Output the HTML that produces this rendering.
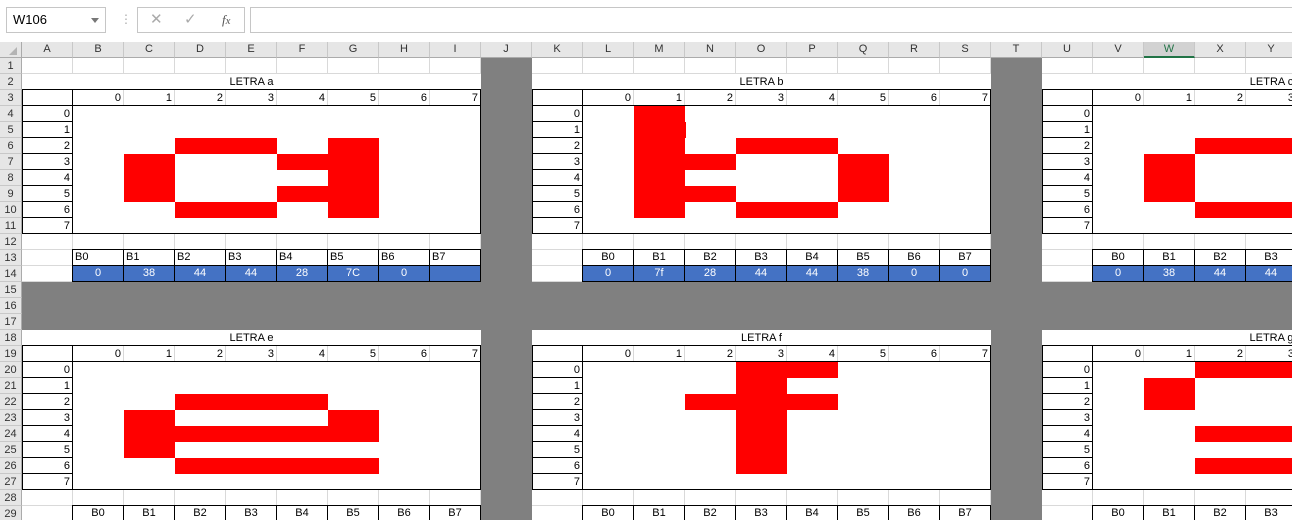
<!DOCTYPE html><html style="overflow:hidden;width:1292px;height:520px"><head><style>
*{box-sizing:border-box;margin:0;padding:0}
html,body{overflow:hidden}
body{width:1292px;height:520px;overflow:hidden;position:relative;background:#fff;font-family:"Liberation Sans",Arial,sans-serif;font-size:11px;color:#000}
#w{position:absolute;left:0;top:0;width:1292px;height:520px;overflow:hidden}
.a{position:absolute}
.grid{left:22px;top:58px;width:1270px;height:462px;background-image:linear-gradient(to right,transparent 50px,#d9d9d9 50px),linear-gradient(to bottom,transparent 15px,#d9d9d9 15px);background-size:51px 100%,100% 16px}
.ch{top:42px;height:16px;width:51px;background:#e6e6e6;border-right:1px solid #c8c8c8;border-bottom:1px solid #ababab;text-align:center;line-height:15px;color:#333}
.rh{left:0;width:22px;height:16px;background:#e6e6e6;border-bottom:1px solid #c8c8c8;border-right:1px solid #ababab;text-align:center;line-height:16px;color:#333}
.blk{position:absolute;width:459px;height:224px}
.blk>div{position:absolute}
.t{left:0;top:0;width:459px;height:15px;background:#fff;text-align:center;line-height:16px}
.box{left:0;top:15px;width:459px;height:145px;border:1px solid #000}
.hl{left:0;top:31px;width:459px;height:1px;background:#000}
.vl{left:50px;top:15px;width:1px;height:145px;background:#000}
.in{left:51px;top:32px;width:407px;height:127px;background:#fff}
.n{width:48px;text-align:right;line-height:16px;height:16px}
.rl{left:0;width:51px;height:1px;background:#000}
.r{background:#f00}
.c13{width:52px;height:17px;border:1px solid #000;background:#fff;line-height:15px;padding-left:2px}
.cc{text-align:center;padding-left:0}
.c14{width:52px;height:17px;border:1px solid #000;background:#4472c4;color:#fff;text-align:center;line-height:15px}
.g{background:#808080}
</style></head><body><div id="w">
<div class="a" style="left:6px;top:7px;width:100px;height:26px;border:1px solid #c6c6c6;font-size:13px;line-height:24px;padding-left:6px">W106<span class="a" style="left:84px;top:10px;border-left:4px solid transparent;border-right:4px solid transparent;border-top:5px solid #777"></span></div>
<div class="a" style="left:120px;top:12px;color:#aaa;font-size:12px">⋮</div>
<div class="a" style="left:137px;top:7px;width:108px;height:26px;border:1px solid #c6c6c6;color:#aaa;font-size:15px;line-height:24px"><span class="a" style="left:12px">✕</span><span class="a" style="left:46px">✓</span><span class="a" style="left:84px;color:#555;font-style:italic;font-family:'Liberation Serif',serif;font-size:13px">f<small>x</small></span></div>
<div class="a" style="left:250px;top:7px;width:1042px;height:26px;border:1px solid #c6c6c6;border-right:none"></div>
<div class="a grid"></div>
<div class="a" style="left:0;top:42px;width:22px;height:16px;background:#e6e6e6;border-right:1px solid #ababab;border-bottom:1px solid #ababab"></div>
<div class="a" style="left:9px;top:47px;border-left:8px solid transparent;border-bottom:8px solid #b4b4b4"></div>
<div class="a ch" style="left:22px">A</div><div class="a ch" style="left:73px">B</div><div class="a ch" style="left:124px">C</div><div class="a ch" style="left:175px">D</div><div class="a ch" style="left:226px">E</div><div class="a ch" style="left:277px">F</div><div class="a ch" style="left:328px">G</div><div class="a ch" style="left:379px">H</div><div class="a ch" style="left:430px">I</div><div class="a ch" style="left:481px">J</div><div class="a ch" style="left:532px">K</div><div class="a ch" style="left:583px">L</div><div class="a ch" style="left:634px">M</div><div class="a ch" style="left:685px">N</div><div class="a ch" style="left:736px">O</div><div class="a ch" style="left:787px">P</div><div class="a ch" style="left:838px">Q</div><div class="a ch" style="left:889px">R</div><div class="a ch" style="left:940px">S</div><div class="a ch" style="left:991px">T</div><div class="a ch" style="left:1042px">U</div><div class="a ch" style="left:1093px">V</div><div class="a ch" style="left:1144px;background:#d2d2d2;border-bottom:2px solid #217346;color:#217346">W</div><div class="a ch" style="left:1195px">X</div><div class="a ch" style="left:1246px">Y</div>
<div class="a rh" style="top:58px">1</div><div class="a rh" style="top:74px">2</div><div class="a rh" style="top:90px">3</div><div class="a rh" style="top:106px">4</div><div class="a rh" style="top:122px">5</div><div class="a rh" style="top:138px">6</div><div class="a rh" style="top:154px">7</div><div class="a rh" style="top:170px">8</div><div class="a rh" style="top:186px">9</div><div class="a rh" style="top:202px">10</div><div class="a rh" style="top:218px">11</div><div class="a rh" style="top:234px">12</div><div class="a rh" style="top:250px">13</div><div class="a rh" style="top:266px">14</div><div class="a rh" style="top:282px">15</div><div class="a rh" style="top:298px">16</div><div class="a rh" style="top:314px">17</div><div class="a rh" style="top:330px">18</div><div class="a rh" style="top:346px">19</div><div class="a rh" style="top:362px">20</div><div class="a rh" style="top:378px">21</div><div class="a rh" style="top:394px">22</div><div class="a rh" style="top:410px">23</div><div class="a rh" style="top:426px">24</div><div class="a rh" style="top:442px">25</div><div class="a rh" style="top:458px">26</div><div class="a rh" style="top:474px">27</div><div class="a rh" style="top:490px">28</div><div class="a rh" style="top:506px">29</div>

<div class="blk" style="left:22px;top:74px">
<div class="t">LETRA a</div><div class="box"></div><div class="hl"></div><div class="vl"></div><div class="in"></div>
<div class="n" style="left:51px;top:16px">0</div><div class="n" style="left:102px;top:16px">1</div><div class="n" style="left:153px;top:16px">2</div><div class="n" style="left:204px;top:16px">3</div><div class="n" style="left:255px;top:16px">4</div><div class="n" style="left:306px;top:16px">5</div><div class="n" style="left:357px;top:16px">6</div><div class="n" style="left:408px;top:16px">7</div>
<div class="n" style="left:0;top:32px">0</div><div class="n" style="left:0;top:48px">1</div><div class="n" style="left:0;top:64px">2</div><div class="n" style="left:0;top:80px">3</div><div class="n" style="left:0;top:96px">4</div><div class="n" style="left:0;top:112px">5</div><div class="n" style="left:0;top:128px">6</div><div class="n" style="left:0;top:144px">7</div>
<div class="rl" style="top:47px"></div><div class="rl" style="top:63px"></div><div class="rl" style="top:79px"></div><div class="rl" style="top:95px"></div><div class="rl" style="top:111px"></div><div class="rl" style="top:127px"></div><div class="rl" style="top:143px"></div>
<div class="r" style="left:153px;top:64px;width:102px;height:16px"></div><div class="r" style="left:306px;top:64px;width:51px;height:80px"></div><div class="r" style="left:102px;top:80px;width:51px;height:48px"></div><div class="r" style="left:255px;top:80px;width:51px;height:16px"></div><div class="r" style="left:255px;top:112px;width:51px;height:16px"></div><div class="r" style="left:153px;top:128px;width:102px;height:16px"></div>
<div class="c13" style="left:50px;top:175px">B0</div><div class="c13" style="left:101px;top:175px">B1</div><div class="c13" style="left:152px;top:175px">B2</div><div class="c13" style="left:203px;top:175px">B3</div><div class="c13" style="left:254px;top:175px">B4</div><div class="c13" style="left:305px;top:175px">B5</div><div class="c13" style="left:356px;top:175px">B6</div><div class="c13" style="left:407px;top:175px">B7</div>
<div class="c14" style="left:50px;top:191px">0</div><div class="c14" style="left:101px;top:191px">38</div><div class="c14" style="left:152px;top:191px">44</div><div class="c14" style="left:203px;top:191px">44</div><div class="c14" style="left:254px;top:191px">28</div><div class="c14" style="left:305px;top:191px">7C</div><div class="c14" style="left:356px;top:191px">0</div><div class="c14" style="left:407px;top:191px"></div>
</div>

<div class="blk" style="left:532px;top:74px">
<div class="t">LETRA b</div><div class="box"></div><div class="hl"></div><div class="vl"></div><div class="in"></div>
<div class="n" style="left:51px;top:16px">0</div><div class="n" style="left:102px;top:16px">1</div><div class="n" style="left:153px;top:16px">2</div><div class="n" style="left:204px;top:16px">3</div><div class="n" style="left:255px;top:16px">4</div><div class="n" style="left:306px;top:16px">5</div><div class="n" style="left:357px;top:16px">6</div><div class="n" style="left:408px;top:16px">7</div>
<div class="n" style="left:0;top:32px">0</div><div class="n" style="left:0;top:48px">1</div><div class="n" style="left:0;top:64px">2</div><div class="n" style="left:0;top:80px">3</div><div class="n" style="left:0;top:96px">4</div><div class="n" style="left:0;top:112px">5</div><div class="n" style="left:0;top:128px">6</div><div class="n" style="left:0;top:144px">7</div>
<div class="rl" style="top:47px"></div><div class="rl" style="top:63px"></div><div class="rl" style="top:79px"></div><div class="rl" style="top:95px"></div><div class="rl" style="top:111px"></div><div class="rl" style="top:127px"></div><div class="rl" style="top:143px"></div>
<div class="r" style="left:102px;top:32px;width:51px;height:112px"></div><div class="r" style="left:102px;top:48px;width:52px;height:16px"></div><div class="r" style="left:153px;top:80px;width:51px;height:16px"></div><div class="r" style="left:153px;top:112px;width:51px;height:16px"></div><div class="r" style="left:204px;top:64px;width:102px;height:16px"></div><div class="r" style="left:204px;top:128px;width:102px;height:16px"></div><div class="r" style="left:306px;top:80px;width:51px;height:48px"></div>
<div class="c13 cc" style="left:50px;top:175px">B0</div><div class="c13 cc" style="left:101px;top:175px">B1</div><div class="c13 cc" style="left:152px;top:175px">B2</div><div class="c13 cc" style="left:203px;top:175px">B3</div><div class="c13 cc" style="left:254px;top:175px">B4</div><div class="c13 cc" style="left:305px;top:175px">B5</div><div class="c13 cc" style="left:356px;top:175px">B6</div><div class="c13 cc" style="left:407px;top:175px">B7</div>
<div class="c14" style="left:50px;top:191px">0</div><div class="c14" style="left:101px;top:191px">7f</div><div class="c14" style="left:152px;top:191px">28</div><div class="c14" style="left:203px;top:191px">44</div><div class="c14" style="left:254px;top:191px">44</div><div class="c14" style="left:305px;top:191px">38</div><div class="c14" style="left:356px;top:191px">0</div><div class="c14" style="left:407px;top:191px">0</div>
</div>

<div class="blk" style="left:1042px;top:74px">
<div class="t">LETRA c</div><div class="box"></div><div class="hl"></div><div class="vl"></div><div class="in"></div>
<div class="n" style="left:51px;top:16px">0</div><div class="n" style="left:102px;top:16px">1</div><div class="n" style="left:153px;top:16px">2</div><div class="n" style="left:204px;top:16px">3</div>
<div class="n" style="left:0;top:32px">0</div><div class="n" style="left:0;top:48px">1</div><div class="n" style="left:0;top:64px">2</div><div class="n" style="left:0;top:80px">3</div><div class="n" style="left:0;top:96px">4</div><div class="n" style="left:0;top:112px">5</div><div class="n" style="left:0;top:128px">6</div><div class="n" style="left:0;top:144px">7</div>
<div class="rl" style="top:47px"></div><div class="rl" style="top:63px"></div><div class="rl" style="top:79px"></div><div class="rl" style="top:95px"></div><div class="rl" style="top:111px"></div><div class="rl" style="top:127px"></div><div class="rl" style="top:143px"></div>
<div class="r" style="left:153px;top:64px;width:102px;height:16px"></div><div class="r" style="left:102px;top:80px;width:51px;height:48px"></div><div class="r" style="left:153px;top:128px;width:102px;height:16px"></div>
<div class="c13 cc" style="left:50px;top:175px">B0</div><div class="c13 cc" style="left:101px;top:175px">B1</div><div class="c13 cc" style="left:152px;top:175px">B2</div><div class="c13 cc" style="left:203px;top:175px">B3</div>
<div class="c14" style="left:50px;top:191px">0</div><div class="c14" style="left:101px;top:191px">38</div><div class="c14" style="left:152px;top:191px">44</div><div class="c14" style="left:203px;top:191px">44</div>
</div>

<div class="blk" style="left:22px;top:330px">
<div class="t">LETRA e</div><div class="box"></div><div class="hl"></div><div class="vl"></div><div class="in"></div>
<div class="n" style="left:51px;top:16px">0</div><div class="n" style="left:102px;top:16px">1</div><div class="n" style="left:153px;top:16px">2</div><div class="n" style="left:204px;top:16px">3</div><div class="n" style="left:255px;top:16px">4</div><div class="n" style="left:306px;top:16px">5</div><div class="n" style="left:357px;top:16px">6</div><div class="n" style="left:408px;top:16px">7</div>
<div class="n" style="left:0;top:32px">0</div><div class="n" style="left:0;top:48px">1</div><div class="n" style="left:0;top:64px">2</div><div class="n" style="left:0;top:80px">3</div><div class="n" style="left:0;top:96px">4</div><div class="n" style="left:0;top:112px">5</div><div class="n" style="left:0;top:128px">6</div><div class="n" style="left:0;top:144px">7</div>
<div class="rl" style="top:47px"></div><div class="rl" style="top:63px"></div><div class="rl" style="top:79px"></div><div class="rl" style="top:95px"></div><div class="rl" style="top:111px"></div><div class="rl" style="top:127px"></div><div class="rl" style="top:143px"></div>
<div class="r" style="left:153px;top:64px;width:153px;height:16px"></div><div class="r" style="left:102px;top:80px;width:51px;height:48px"></div><div class="r" style="left:306px;top:80px;width:51px;height:32px"></div><div class="r" style="left:153px;top:96px;width:153px;height:16px"></div><div class="r" style="left:153px;top:128px;width:204px;height:16px"></div>
<div class="c13 cc" style="left:50px;top:175px">B0</div><div class="c13 cc" style="left:101px;top:175px">B1</div><div class="c13 cc" style="left:152px;top:175px">B2</div><div class="c13 cc" style="left:203px;top:175px">B3</div><div class="c13 cc" style="left:254px;top:175px">B4</div><div class="c13 cc" style="left:305px;top:175px">B5</div><div class="c13 cc" style="left:356px;top:175px">B6</div><div class="c13 cc" style="left:407px;top:175px">B7</div>
</div>

<div class="blk" style="left:532px;top:330px">
<div class="t">LETRA f</div><div class="box"></div><div class="hl"></div><div class="vl"></div><div class="in"></div>
<div class="n" style="left:51px;top:16px">0</div><div class="n" style="left:102px;top:16px">1</div><div class="n" style="left:153px;top:16px">2</div><div class="n" style="left:204px;top:16px">3</div><div class="n" style="left:255px;top:16px">4</div><div class="n" style="left:306px;top:16px">5</div><div class="n" style="left:357px;top:16px">6</div><div class="n" style="left:408px;top:16px">7</div>
<div class="n" style="left:0;top:32px">0</div><div class="n" style="left:0;top:48px">1</div><div class="n" style="left:0;top:64px">2</div><div class="n" style="left:0;top:80px">3</div><div class="n" style="left:0;top:96px">4</div><div class="n" style="left:0;top:112px">5</div><div class="n" style="left:0;top:128px">6</div><div class="n" style="left:0;top:144px">7</div>
<div class="rl" style="top:47px"></div><div class="rl" style="top:63px"></div><div class="rl" style="top:79px"></div><div class="rl" style="top:95px"></div><div class="rl" style="top:111px"></div><div class="rl" style="top:127px"></div><div class="rl" style="top:143px"></div>
<div class="r" style="left:204px;top:32px;width:51px;height:112px"></div><div class="r" style="left:255px;top:32px;width:51px;height:16px"></div><div class="r" style="left:153px;top:64px;width:153px;height:16px"></div>
<div class="c13 cc" style="left:50px;top:175px">B0</div><div class="c13 cc" style="left:101px;top:175px">B1</div><div class="c13 cc" style="left:152px;top:175px">B2</div><div class="c13 cc" style="left:203px;top:175px">B3</div><div class="c13 cc" style="left:254px;top:175px">B4</div><div class="c13 cc" style="left:305px;top:175px">B5</div><div class="c13 cc" style="left:356px;top:175px">B6</div><div class="c13 cc" style="left:407px;top:175px">B7</div>
</div>

<div class="blk" style="left:1042px;top:330px">
<div class="t">LETRA g</div><div class="box"></div><div class="hl"></div><div class="vl"></div><div class="in"></div>
<div class="n" style="left:51px;top:16px">0</div><div class="n" style="left:102px;top:16px">1</div><div class="n" style="left:153px;top:16px">2</div><div class="n" style="left:204px;top:16px">3</div>
<div class="n" style="left:0;top:32px">0</div><div class="n" style="left:0;top:48px">1</div><div class="n" style="left:0;top:64px">2</div><div class="n" style="left:0;top:80px">3</div><div class="n" style="left:0;top:96px">4</div><div class="n" style="left:0;top:112px">5</div><div class="n" style="left:0;top:128px">6</div><div class="n" style="left:0;top:144px">7</div>
<div class="rl" style="top:47px"></div><div class="rl" style="top:63px"></div><div class="rl" style="top:79px"></div><div class="rl" style="top:95px"></div><div class="rl" style="top:111px"></div><div class="rl" style="top:127px"></div><div class="rl" style="top:143px"></div>
<div class="r" style="left:153px;top:32px;width:102px;height:16px"></div><div class="r" style="left:102px;top:48px;width:51px;height:32px"></div><div class="r" style="left:153px;top:96px;width:102px;height:16px"></div><div class="r" style="left:153px;top:128px;width:102px;height:16px"></div>
<div class="c13 cc" style="left:50px;top:175px">B0</div><div class="c13 cc" style="left:101px;top:175px">B1</div><div class="c13 cc" style="left:152px;top:175px">B2</div><div class="c13 cc" style="left:203px;top:175px">B3</div>
</div>

<div class="a g" style="left:481px;top:58px;width:51px;height:462px"></div>
<div class="a g" style="left:991px;top:58px;width:51px;height:462px"></div>
<div class="a g" style="left:22px;top:282px;width:1270px;height:48px"></div>
</div></body></html>
